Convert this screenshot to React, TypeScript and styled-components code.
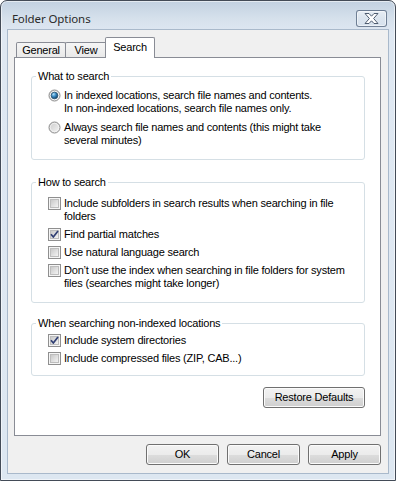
import type { FC, ReactNode } from "react";
import styled, { createGlobalStyle } from "styled-components";

const GlobalStyle = createGlobalStyle`
  html, body {
    margin: 0;
    padding: 0;
    background: #ffffff;
  }
  body {
    font-family: "Liberation Sans", Arial, sans-serif;
    font-size: 11px;
    letter-spacing: -0.2px;
    color: #000;
  }
`;

const Window = styled.div`
  width: 396px;
  height: 481px;
  box-sizing: border-box;
  border: 1px solid #434b57;
  border-radius: 7px 7px 0 0;
  background: linear-gradient(180deg, #c2d1e1 0px, #d6e1ec 18px, #dfe8f2 32px, #dde7f1 100%);
  box-shadow: inset 0 0 0 1px rgba(255, 255, 255, 0.55);
  padding: 0 6px 6px 6px;
  display: flex;
  flex-direction: column;
`;

const TitleBar = styled.div`
  height: 28px;
  display: flex;
  align-items: flex-start;
  justify-content: space-between;
  padding: 9px 2px 0 5px;
  box-sizing: border-box;
`;

const Title = styled.div`
  font-family: "Noto Sans", "Open Sans", sans-serif;
  font-size: 11.5px;
  letter-spacing: -0.1px;
  line-height: 17px;
  color: #2a2a2a;
`;

const CloseButton = styled.button`
  width: 31px;
  height: 17px;
  padding: 0;
  margin: 0;
  border: 1px solid rgba(74, 92, 118, 0.75);
  border-radius: 3px;
  background: linear-gradient(180deg, rgba(255, 255, 255, 0.55), rgba(255, 255, 255, 0.15) 50%, rgba(210, 222, 236, 0.4) 100%);
  box-shadow: inset 0 0 0 1px rgba(255, 255, 255, 0.5);
  display: flex;
  align-items: center;
  justify-content: center;
`;

const Client = styled.div`
  flex: 1;
  border: 1px solid #a9b9cb;
  background: #f0f0f0;
  display: flex;
  flex-direction: column;
  padding: 7px 7px 8px 6px;
  min-height: 0;
`;

const TabStrip = styled.div`
  display: flex;
  align-items: flex-end;
  height: 21px;
  padding-left: 2px;
  margin-bottom: -1px;
  position: relative;
  z-index: 1;
`;

const Tab = styled.div<{ $w: number; $active?: boolean; $shift: number }>`
  box-sizing: border-box;
  width: ${(p) => p.$w}px;
  height: ${(p) => (p.$active ? 21 : 15)}px;
  margin-left: ${(p) => p.$shift}px;
  margin-bottom: ${(p) => (p.$active ? 0 : 1)}px;
  padding-top: ${(p) => (p.$active ? 3 : 1)}px;
  border: 1px solid #898c95;
  border-bottom: none;
  border-radius: 2px 2px 0 0;
  background: ${(p) => (p.$active ? "#ffffff" : "linear-gradient(180deg, #f5f5f5, #e9e9e9)")};
  text-align: center;
  line-height: 13px;
  position: relative;
  z-index: ${(p) => (p.$active ? 2 : 1)};
`;

const Panel = styled.div`
  flex: 1;
  background: #ffffff;
  border: 1px solid #898c95;
  padding: 12px 15px 0 16px;
  display: flex;
  flex-direction: column;
`;

const GroupBox = styled.fieldset<{ $mt: number }>`
  margin: ${(p) => p.$mt}px 0 0 0;
  min-width: 0;
  border: 1px solid #d5dfe5;
  border-radius: 3px;
  padding: 0 0 0 4px;
`;

const Legend = styled.legend`
  padding: 0 2px;
  line-height: 13px;
  font-size: 11px;
`;

const GroupContent = styled.div<{ $pt: number; $pb: number; $gap: number }>`
  display: flex;
  flex-direction: column;
  gap: ${(p) => p.$gap}px;
  padding: ${(p) => p.$pt}px 0 ${(p) => p.$pb}px 12px;
`;

const Option = styled.label`
  display: flex;
  align-items: flex-start;
  gap: 3px;
  line-height: 13px;
  white-space: nowrap;
`;

const Mark = styled.svg`
  flex: none;
  display: block;
`;

const RestoreRow = styled.div`
  display: flex;
  justify-content: flex-end;
  margin-top: 11px;
`;

const Footer = styled.div`
  display: flex;
  justify-content: flex-end;
  gap: 8px;
  margin-top: 8px;
`;

const Button = styled.button<{ $w: number }>`
  width: ${(p) => p.$w}px;
  height: 21px;
  padding: 0;
  border: 1px solid #707070;
  border-radius: 3px;
  background: linear-gradient(180deg, #f2f2f2 0%, #ebebeb 50%, #dddddd 50%, #cfcfcf 100%);
  box-shadow: inset 0 0 0 1px #fbfbfb;
  font-family: "Liberation Sans", Arial, sans-serif;
  font-size: 11px;
  letter-spacing: -0.2px;
  color: #000;
  line-height: 13px;
`;

const CheckMark: FC<{ checked?: boolean }> = ({ checked }) => (
  <Mark width="13" height="13" viewBox="0 0 13 13">
    <defs>
      <linearGradient id="cbfill" x1="0" y1="0" x2="1" y2="1">
        <stop offset="0" stopColor="#c6c6c6" />
        <stop offset="1" stopColor="#f6f6f6" />
      </linearGradient>
    </defs>
    <rect x="0.5" y="0.5" width="12" height="12" fill="#f5f5f5" stroke="#8f8f8f" />
    <rect x="2.5" y="2.5" width="8" height="8" fill="url(#cbfill)" stroke="#bdbdbd" />
    {checked && (
      <path d="M3 6.3 L5.3 9 L10 3" fill="none" stroke="#303f73" strokeWidth="1.7" strokeLinejoin="round" />
    )}
  </Mark>
);

const RadioMark: FC<{ checked?: boolean }> = ({ checked }) => (
  <Mark width="13" height="13" viewBox="0 0 13 13">
    <defs>
      <linearGradient id="rbfill" x1="0" y1="0" x2="1" y2="1">
        <stop offset="0" stopColor="#c9c9c9" />
        <stop offset="1" stopColor="#f7f7f7" />
      </linearGradient>
      <radialGradient id="rbdot" cx="0.35" cy="0.3" r="0.75">
        <stop offset="0" stopColor="#b5e3fb" />
        <stop offset="0.45" stopColor="#3d8fc8" />
        <stop offset="1" stopColor="#0e3c64" />
      </radialGradient>
    </defs>
    <circle cx="6.5" cy="6.5" r="5.5" fill="url(#rbfill)" stroke="#8c8c8c" />
    <circle cx="6.5" cy="6.5" r="4.2" fill="none" stroke="#f4f4f4" strokeWidth="0.8" />
    {checked && <circle cx="6.5" cy="6.5" r="3.3" fill="url(#rbdot)" stroke="#24506f" strokeWidth="0.8" />}
  </Mark>
);

const CheckOption: FC<{ checked?: boolean; children: ReactNode }> = ({ checked, children }) => (
  <Option>
    <CheckMark checked={checked} />
    <span>{children}</span>
  </Option>
);

const RadioOption: FC<{ checked?: boolean; children: ReactNode }> = ({ checked, children }) => (
  <Option>
    <RadioMark checked={checked} />
    <span>{children}</span>
  </Option>
);

const CloseGlyph = () => (
  <svg width="15" height="11" viewBox="0 0 15 11">
    <polygon
      points="1,0.5 5,0.5 7.5,3.2 10,0.5 14,0.5 9.6,5.5 14,10.5 10,10.5 7.5,7.8 5,10.5 1,10.5 5.4,5.5"
      fill="#ffffff"
      stroke="#4f5d70"
      strokeWidth="1"
      strokeLinejoin="round"
    />
  </svg>
);

export default function App() {
  return (
    <>
      <GlobalStyle />
      <Window>
        <TitleBar>
          <Title>Folder Options</Title>
          <CloseButton aria-label="Close">
            <CloseGlyph />
          </CloseButton>
        </TitleBar>
        <Client>
          <TabStrip>
            <Tab $w={50} $shift={0}>General</Tab>
            <Tab $w={42} $shift={-1}>View</Tab>
            <Tab $w={50} $shift={-2} $active>
              Search
            </Tab>
          </TabStrip>
          <Panel>
            <GroupBox $mt={0}>
              <Legend>What to search</Legend>
              <GroupContent $pt={6} $pb={12} $gap={6}>
                <RadioOption checked>
                  In indexed locations, search file names and contents.
                  <br />
                  In non-indexed locations, search file names only.
                </RadioOption>
                <RadioOption>
                  Always search file names and contents (this might take
                  <br />
                  several minutes)
                </RadioOption>
              </GroupContent>
            </GroupBox>

            <GroupBox $mt={16}>
              <Legend>How to search</Legend>
              <GroupContent $pt={8} $pb={12} $gap={5}>
                <CheckOption>
                  Include subfolders in search results when searching in file
                  <br />
                  folders
                </CheckOption>
                <CheckOption checked>Find partial matches</CheckOption>
                <CheckOption>Use natural language search</CheckOption>
                <CheckOption>
                  Don’t use the index when searching in file folders for system
                  <br />
                  files (searches might take longer)
                </CheckOption>
              </GroupContent>
            </GroupBox>

            <GroupBox $mt={14}>
              <Legend>When searching non-indexed locations</Legend>
              <GroupContent $pt={4} $pb={10} $gap={5}>
                <CheckOption checked>Include system directories</CheckOption>
                <CheckOption>Include compressed files (ZIP, CAB...)</CheckOption>
              </GroupContent>
            </GroupBox>

            <RestoreRow>
              <Button $w={102}>Restore Defaults</Button>
            </RestoreRow>
          </Panel>
          <Footer>
            <Button $w={73}>OK</Button>
            <Button $w={73}>Cancel</Button>
            <Button $w={73}>Apply</Button>
          </Footer>
        </Client>
      </Window>
    </>
  );
}
